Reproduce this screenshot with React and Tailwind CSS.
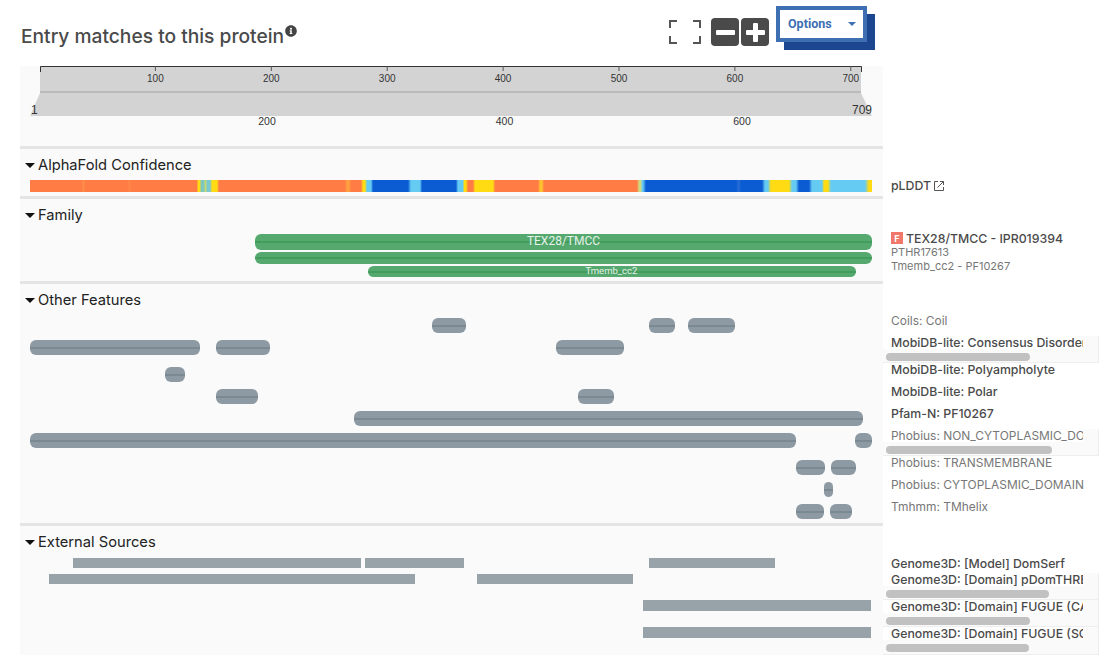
import React from "react";
import { FaInfoCircle } from "react-icons/fa";

const ORANGE = "#ff7d45";
const YELLOW = "#ffdb13";
const CYAN = "#65cbf3";
const BLUE = "#0b5bd3";

// [from, to, colour] in page x, blended into each other at the edges
const confidence = [
  [30, 82, ORANGE], [83, 84, "#ff8f48"], [85, 128, ORANGE], [129, 130, "#ff8646"], [131, 197, ORANGE], [198, 200, YELLOW], [201, 204, "#7cc8c0"],
  [205, 206, "#c8d870"], [207, 210, "#7cc8d0"], [212, 217, YELLOW], [219, 345, ORANGE], [347, 349, "#ffa040"],
  [351, 361, ORANGE], [363, 365, YELLOW], [367, 371, CYAN], [373, 408, BLUE], [411, 420, CYAN],
  [422, 456, BLUE], [458, 463, CYAN], [464, 466, YELLOW], [468, 473, ORANGE], [475, 493, YELLOW],
  [495, 538, ORANGE], [540, 542, "#ffc030"], [544, 637, ORANGE], [639, 641, "#d0d880"], [642, 643, CYAN],
  [646, 736, BLUE], [739, 739, "#2a6ed6"], [741, 762, BLUE], [765, 768, CYAN], [771, 789, YELLOW],
  [792, 796, CYAN], [799, 809, BLUE], [812, 822, CYAN], [824, 828, YELLOW], [831, 865, CYAN], [869, 872, YELLOW],
];

const confidenceGradient = () => {
  const pct = (x) => `${(((x - 30) / 842) * 100).toFixed(2)}%`;
  const stops = confidence.flatMap(([a, b, c]) => [`${c} ${pct(a)}`, `${c} ${pct(b)}`]);
  return `linear-gradient(to right, ${stops.join(", ")})`;
};

function Caret() {
  return (
    <svg width="10" height="5" viewBox="0 0 10 5" className="shrink-0">
      <path d="M0 0H10L5 5Z" fill="#111" />
    </svg>
  );
}

function Divider() {
  return <div className="ml-5 h-[3px] w-[863px] bg-[#e4e4e4]" />;
}

function SectionTitle({ children, height }) {
  return (
    <div className="ml-5 flex w-[863px] items-start bg-[#fafafa] pl-[5px]" style={{ height }}>
      <div className="mt-[7px] flex h-[18px] items-center gap-[3px] text-[14.7px] leading-[18px] text-[#222]">
        <Caret />
        <span>{children}</span>
      </div>
    </div>
  );
}

// spans are page x coordinates, turned into margins so that bars flow along the row
function Bars({ spans, top, height, children }) {
  let cursor = 20;
  return (
    <div className="flex" style={{ paddingTop: top }}>
      {spans.map(([from, to]) => {
        const marginLeft = from - cursor;
        cursor = to;
        return (
          <div key={from} className="shrink-0" style={{ marginLeft, width: to - from, height }}>
            {children}
          </div>
        );
      })}
    </div>
  );
}

function FeatureBar() {
  return (
    <div className="flex h-full items-center overflow-hidden rounded-[6px] bg-[#8d9aa3]">
      <div className="h-[2px] w-full bg-[#7b8992]" />
    </div>
  );
}

function GreenBar({ label, labelClass }) {
  return (
    <div className="relative flex h-full items-center overflow-hidden rounded-[6px] bg-[#55a96f]">
      <div className="h-[2px] w-full bg-[#429c5c]" />
      {label && (
        <span className={`absolute inset-0 flex items-center justify-center text-white/85 ${labelClass}`}>{label}</span>
      )}
    </div>
  );
}

function Label({ children, bold, scroll }) {
  const tone = bold ? "text-[12.3px] font-medium text-[#4a4a4a]" : "text-[11.95px] text-[#777]";
  if (!scroll) {
    return <div className={`whitespace-nowrap pl-2 leading-[14px] ${tone}`}>{children}</div>;
  }
  return (
    <div className="h-full w-[216px] border-r border-b border-[#eee] bg-[#fafafa]">
      <div className={`h-[13px] w-[200px] overflow-hidden whitespace-nowrap bg-white pl-2 leading-[14px] ${tone}`}>
        {children}
      </div>
      <div className="ml-[3px] mt-[4px] h-[8px] rounded-full bg-[#c1c1c1]" style={{ width: scroll }} />
    </div>
  );
}

function FeatureRow({ spans, label, bold, scroll, height = 22 }) {
  return (
    <div className="flex" style={{ height }}>
      <div className="ml-5 w-[863px] shrink-0 bg-[#fafafa]">
        <Bars spans={spans} top={4} height={15}>
          <FeatureBar />
        </Bars>
      </div>
      <Label bold={bold} scroll={scroll}>{label}</Label>
    </div>
  );
}

function SourceRow({ spans, label, scroll, top = 0, barHeight = 11, height }) {
  return (
    <div className="flex" style={{ height }}>
      <div className="ml-5 w-[863px] shrink-0 bg-[#fafafa]">
        <Bars spans={spans} top={top} height={barHeight}>
          <div className="h-full bg-[#98a3a9]" />
        </Bars>
      </div>
      <Label bold scroll={scroll}>{label}</Label>
    </div>
  );
}

function Ruler() {
  const top = [100, 200, 300, 400, 500, 600, 700];
  const bottom = [[247, "200"], [484.5, "400"], [722, "600"]];
  return (
    <div className="ml-5 h-[80px] w-[863px] bg-[#fafafa]">
      <svg width="863" height="80" viewBox="0 0 863 80" fontFamily="Liberation Sans, sans-serif" fill="#333">
        <rect x="20" y="0" width="821" height="25" fill="#d3d3d3" />
        <rect x="20" y="25" width="821" height="2" fill="#bbbbbb" />
        <path d="M20 27H841L852 50H10Z" fill="#d3d3d3" />
        <path d="M20.5 6V0.5H841.5V6" fill="none" stroke="#333" />
        {top.map((n) => {
          const x = 19.5 + n * 1.159;
          return (
            <g key={n}>
              <path d={`M${x} 0V5`} stroke="#555" />
              <text x={x} y="16" fontSize="10" textAnchor="middle">{n}</text>
            </g>
          );
        })}
        <text x="11" y="48" fontSize="12" textAnchor="start">1</text>
        <text x="832" y="48" fontSize="12" textAnchor="start">709</text>
        {bottom.map(([x, n]) => (
          <text key={n} x={x} y="59" fontSize="10.5" textAnchor="middle">{n}</text>
        ))}
      </svg>
    </div>
  );
}

function Toolbar() {
  return (
    <div className="flex h-[66px] items-start">
      <h1 className="ml-[21px] mt-[23px] flex text-[19.2px] font-medium leading-[26px] text-[#4a4a4a]">
        Entry matches to this protein
        <FaInfoCircle className="ml-[1px] mt-[2px] text-[12px] text-[#444]" />
      </h1>
      <div className="ml-auto mr-[233px] flex items-start">
        <svg width="32" height="24" viewBox="0 0 32 24" className="mr-[10px] mt-[20px]" fill="none" stroke="#555" strokeWidth="2">
          <path d="M1 8V1H8M24 1H31V8M31 16V23H24M8 23H1V16" />
        </svg>
        <button className="mt-[18px] flex h-[28px] w-[28px] items-center justify-center rounded-[4px] bg-[#4a4a4a]">
          <span className="h-[5px] w-[19px] rounded-[1px] bg-white" />
        </button>
        <button className="relative ml-[2px] mt-[18px] flex h-[28px] w-[28px] items-center justify-center rounded-[4px] bg-[#4a4a4a]">
          <span className="h-[5px] w-[19px] rounded-[1px] bg-white" />
          <span className="absolute left-[11.5px] top-[4.5px] h-[19px] w-[5px] rounded-[1px] bg-white" />
        </button>
        <button className="ml-[7px] mt-[6px] flex h-[36px] w-[91px] items-center justify-between border-[4px] border-[#3d6fb2] bg-white pl-2 pr-[6px] shadow-[8px_8px_0_#1c4690]">
          <span className="font-['Roboto',sans-serif] text-[12.5px] font-bold text-[#3d6fb2]">Options</span>
          <svg width="8" height="4" viewBox="0 0 8 4" className="mr-[1px]">
            <path d="M0 0H8L4 4Z" fill="#3d6fb2" />
          </svg>
        </button>
      </div>
    </div>
  );
}

function FamilyBlock() {
  return (
    <div className="flex h-[49px]">
      <div className="ml-5 w-[863px] shrink-0 bg-[#fafafa]">
        <Bars spans={[[255, 872]]} top={2} height={16}>
          <GreenBar label="TEX28/TMCC" labelClass="pb-[2px] font-['Roboto',sans-serif] text-[12px]" />
        </Bars>
        <Bars spans={[[255, 872]]} top={2} height={12}>
          <GreenBar />
        </Bars>
        <Bars spans={[[368, 856]]} top={2} height={11}>
          <GreenBar label="Tmemb_cc2" labelClass="pr-[1px] font-['Roboto',sans-serif] text-[9.5px]" />
        </Bars>
      </div>
      <div className="pl-2 text-[11px] leading-[13.5px] text-[#777]">
        <div className="flex h-[14px] items-start text-[12.3px] font-medium leading-[14px] text-[#4a4a4a]">
          <span className="mr-[3px] flex h-[12px] w-[12px] items-center justify-center bg-[#f0776a] text-[9px] font-bold leading-none text-white">F</span>
          <span className="whitespace-nowrap">TEX28/TMCC - IPR019394</span>
        </div>
        <div>PTHR17613</div>
        <div>Tmemb_cc2 - PF10267</div>
      </div>
    </div>
  );
}

export default function App() {
  return (
    <div className="h-[655px] w-[1100px] overflow-hidden bg-white font-['Inter',sans-serif]">
      <Toolbar />
      <Ruler />
      <Divider />

      <SectionTitle height={31}>AlphaFold Confidence</SectionTitle>
      <div className="flex h-[16px]">
        <div className="ml-5 w-[863px] shrink-0 bg-[#fafafa] pl-[10px]">
          <div className="h-[12px] w-[842px]" style={{ background: confidenceGradient() }} />
        </div>
        <div className="flex items-start gap-[3px] pl-2 text-[12.3px] font-medium leading-[12px] text-[#4a4a4a]">
          pLDDT
          <svg width="10" height="10" viewBox="0 0 10 10" fill="none" stroke="#555" className="mt-[1px]">
            <path d="M4 0.5H0.5V9.5H9.5V6M3.5 6.5L9.5 0.5M6 0.5H9.5V4" />
          </svg>
        </div>
      </div>
      <Divider />

      <SectionTitle height={33}>Family</SectionTitle>
      <FamilyBlock />
      <Divider />

      <SectionTitle height={30}>Other Features</SectionTitle>
      <FeatureRow spans={[[432, 466], [649, 675], [688, 735]]} label="Coils: Coil" />
      <FeatureRow spans={[[30, 200], [216, 270], [556, 624]]} label="MobiDB-lite: Consensus Disorder Prediction" bold scroll={144} height={27} />
      <FeatureRow spans={[[165, 185]]} label="MobiDB-lite: Polyampholyte" bold />
      <FeatureRow spans={[[216, 258], [578, 614]]} label="MobiDB-lite: Polar" bold />
      <FeatureRow spans={[[354, 863]]} label="Pfam-N: PF10267" bold />
      <FeatureRow spans={[[30, 796], [855, 872]]} label="Phobius: NON_CYTOPLASMIC_DOMAIN" scroll={166} height={27} />
      <FeatureRow spans={[[796, 825], [831, 856]]} label="Phobius: TRANSMEMBRANE" />
      <FeatureRow spans={[[824, 833]]} label="Phobius: CYTOPLASMIC_DOMAIN" />
      <FeatureRow spans={[[796, 824], [830, 852]]} label="Tmhmm: TMhelix" />
      <div className="ml-5 h-px w-[863px] bg-[#fafafa]" />
      <Divider />

      <SectionTitle height={31}>External Sources</SectionTitle>
      <SourceRow spans={[[73, 361], [365, 464], [649, 775]]} label="Genome3D: [Model] DomSerf" top={1} barHeight={10} height={16} />
      <SourceRow spans={[[49, 415], [477, 633]]} label="Genome3D: [Domain] pDomTHREADER" scroll={163} top={1} barHeight={10} height={27} />
      <SourceRow spans={[[643, 871]]} label="Genome3D: [Domain] FUGUE (CATH)" scroll={144} height={27} />
      <SourceRow spans={[[643, 871]]} label="Genome3D: [Domain] FUGUE (SCOP)" scroll={143} height={28} />
    </div>
  );
}
